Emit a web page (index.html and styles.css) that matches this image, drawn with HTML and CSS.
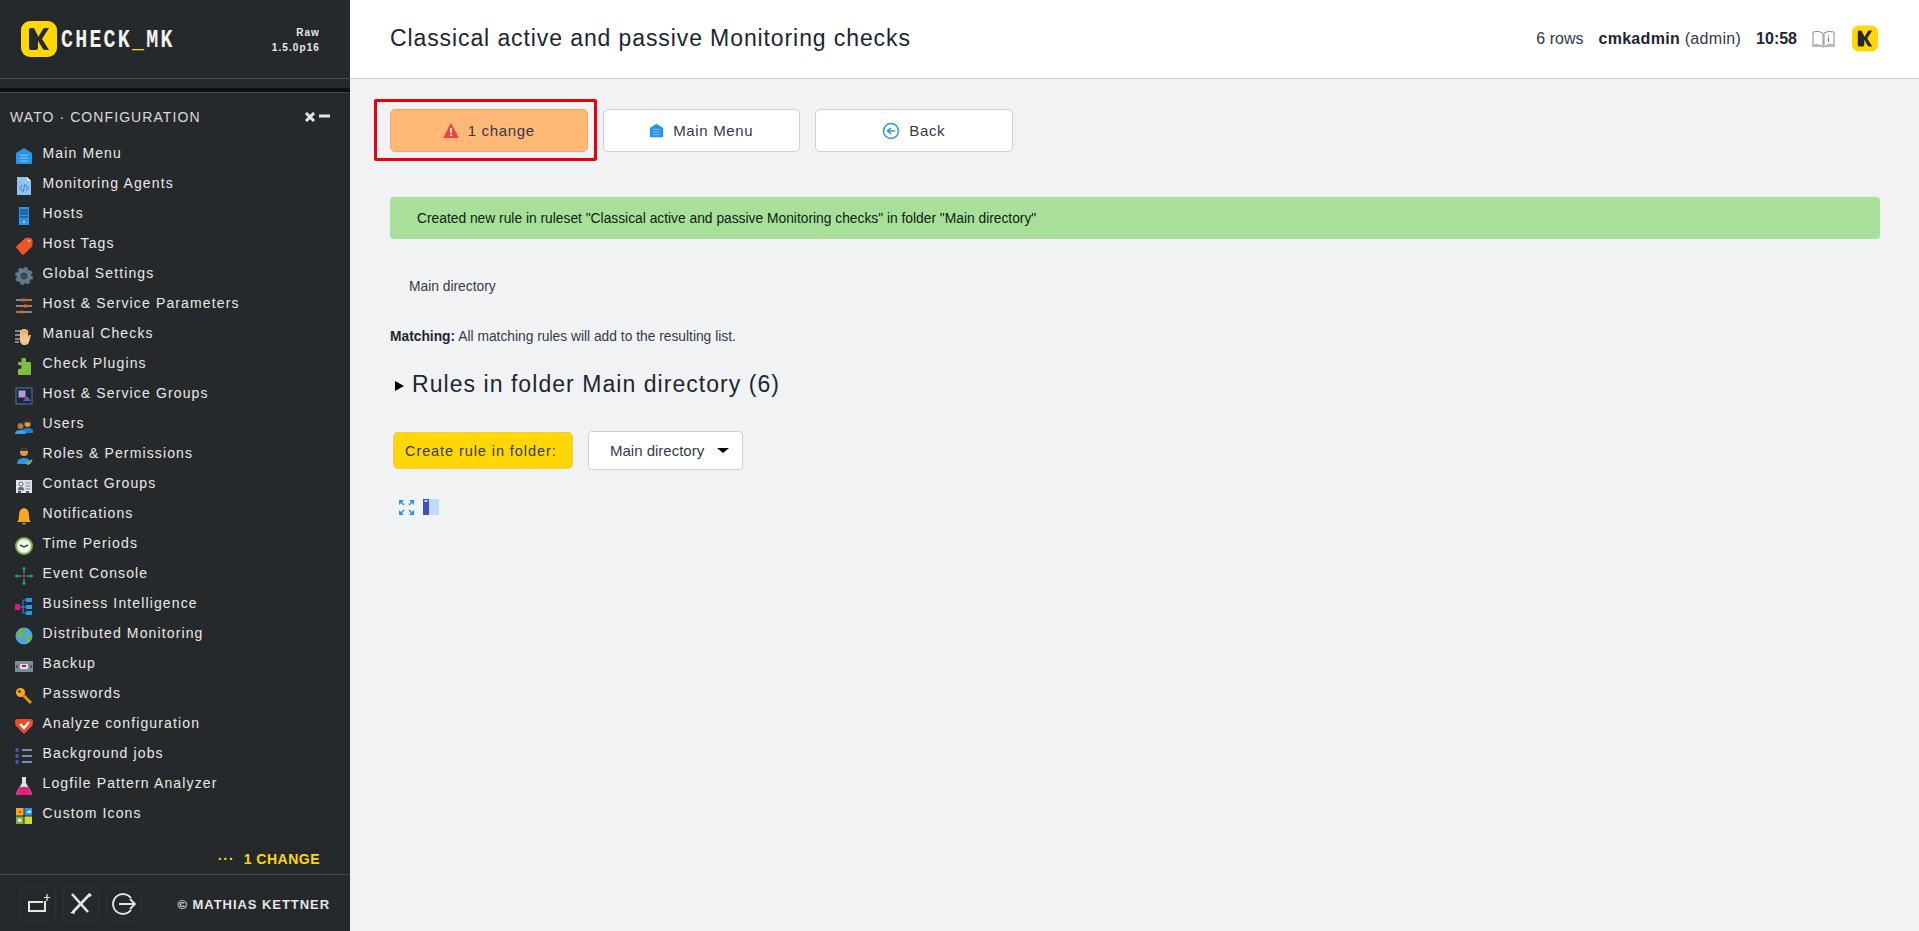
FILE: index.html
```html
<!DOCTYPE html>
<html lang="en">
<head>
    <meta charset="UTF-8">
    <meta name="viewport" content="width=device-width, initial-scale=1.0">
    <title>Classical active and passive Monitoring checks</title>
    <link rel="stylesheet" href="styles.css">
</head>
<body>

<aside class="sidebar">
    <div class="side-head">
        <div class="logo">
            <svg class="logo-mark" width="36" height="36" viewBox="0 0 36 36"><rect width="36" height="36" rx="9" fill="#ffd703"/><path d="M8 9q0-2 2-2h2q1 0 2 2l3 6v12q0 2-2 2h-5q-2 0-2-2zM28 7l-7 11 7 11h-4q-1 0-2-1l-6-10 6-10q1-1 2-1z" fill="#26292b"/></svg>
            <span class="logo-text">CHECK<span class="logo-us">_</span>MK</span>
        </div>
        <div class="version">Raw<br>1.5.0p16</div>
    </div>
    <div class="side-band"></div>

    <div class="snapin-title">
        <span>WATO · CONFIGURATION</span>
        <span class="snapin-ctrl">
            <svg width="12" height="10" viewBox="0 0 12 10"><path d="M2 1l8 8M10 1L2 9" stroke="#e4e6e6" stroke-width="3"/></svg>
            <svg width="11" height="10" viewBox="0 0 11 10"><path d="M0 4h11" stroke="#e4e6e6" stroke-width="3"/></svg>
        </span>
    </div>

    <ul class="menu">
        <li><svg viewBox="0 0 18 18"><path d="M1 6l8-5 8 5v10q0 1-1 1H2q-1 0-1-1z" fill="#2a93ea"/><path d="M5 8h8M5 11h8M5 14h8" stroke="#8cc6f5" stroke-width="1"/></svg>Main Menu</li>
        <li><svg viewBox="0 0 18 18"><path d="M2 0h10l4 4v14H2z" fill="#8fc4f1"/><path d="M12 0v4h4z" fill="#d6eafb"/><path d="M7 8l-2 3 2 3M11 8l2 3-2 3M10 7l-2 8" stroke="#2a7fd0" fill="none"/></svg>Monitoring Agents</li>
        <li><svg viewBox="0 0 18 18"><rect x="4" y="0" width="10" height="18" fill="#2a93ea"/><path d="M5 3h8M5 5h8M5 7h8M5 10h8" stroke="#123f63"/><circle cx="9" cy="15" r="1" fill="#cde6fb"/></svg>Hosts</li>
        <li><svg viewBox="0 0 18 18"><path d="M10 1.500q1-1 2-1l4.500 1q1 .5 1 1.500v5q0 1-1 2L9 17.500q-1 .5-2 0L1.500 11q-1-1 0-2z" fill="#ee5428"/><circle cx="14" cy="4" r="1.200" fill="#f9b39c"/></svg>Host Tags</li>
        <li><svg viewBox="0 0 18 18"><circle cx="9" cy="9" r="5.500" fill="#37474f" stroke="#5e7c8d" stroke-width="4"/><circle cx="9" cy="9" r="7.800" fill="none" stroke="#5e7c8d" stroke-width="2.400" stroke-dasharray="3.500 2.630"/></svg>Global Settings</li>
        <li><svg viewBox="0 0 18 18"><path d="M1 3h16M1 9h16M1 15h16" stroke="#e8e8e8" stroke-width="1"/><path d="M9 3h8M1 9h3M12 9h5M1 15h5" stroke="#ee5a24" stroke-width="1"/><rect x="7" y="1.500" width="3" height="3" fill="#ee5a24"/><rect x="9" y="7.500" width="3" height="3" fill="#ee5a24"/><rect x="5" y="13.500" width="3" height="3" fill="#ee5a24"/></svg>Host &amp; Service Parameters</li>
        <li><svg viewBox="0 0 18 18"><path d="M5 9V3h2v4-5h2v5-5h2v5-4h2v7l1-2h2l-2 7q-1 3-4 3H9q-3 0-4-4z" fill="#f5c48a"/><path d="M7 3v5M9 2v5M11 2v5M13 3v5" stroke="#c98a4a" stroke-width=".600"/><path d="M0 4h5M0 8h5M0 12h5M0 15h4" stroke="#e8e8e8" stroke-width="1.200"/><path d="M3 4h2M3 12h2" stroke="#ee5a24" stroke-width="1.200"/></svg>Manual Checks</li>
        <li><svg viewBox="0 0 18 18"><path d="M7 1h3q1 0 1 1v3h4q1 0 1 1v11q0 1-1 1H4q-1 0-1-1v-5h1.500a2 2 0 0 0 0-4H3V6q0-1 1-1h2.500V2q0-1 .5-1z" fill="#7fbf3f"/></svg>Check Plugins</li>
        <li><svg viewBox="0 0 18 18"><rect x="1" y="1" width="16" height="16" fill="#1d2733" stroke="#3a7fc1"/><rect x="3.500" y="3.500" width="7" height="7" fill="#b69ad8"/><path d="M8 14l4-5 4 5z" fill="#7f4fb0"/></svg>Host &amp; Service Groups</li>
        <li><svg viewBox="0 0 18 18"><circle cx="5.500" cy="9" r="3" fill="#b8794a"/><circle cx="12.500" cy="7" r="3" fill="#e09a50"/><path d="M8.500 4.500q4-3 7 0v1h-7z" fill="#4a3020"/><path d="M2.500 8q3-3 6 0v-1h-6z" fill="#4a3020"/><path d="M7 16V13q2-2 5.500-2t5.500 2v3z" fill="#1e80d0"/><path d="M0 17q0-4 5.500-4t5.500 4z" fill="#3aa0ef"/></svg>Users</li>
        <li><svg viewBox="0 0 18 18"><circle cx="9" cy="5" r="4" fill="#e09a50"/><path d="M5 4q0-4 4-4t4 4z" fill="#3a3a3a"/><path d="M2 17q0-6 7-6t7 6z" fill="#2a93ea"/><path d="M11 15l2 2 4-4" stroke="#6fbf3f" stroke-width="2" fill="none"/></svg>Roles &amp; Permissions</li>
        <li><svg viewBox="0 0 18 18"><rect x="1" y="3" width="16" height="13" fill="#dfe4e8"/><circle cx="6" cy="7" r="2" fill="#fff" stroke="#55606a"/><path d="M3 13q0-3 3-3t3 3zM10.500 6h5M10.500 9h5M10.500 12h5" fill="#55606a" stroke="#7a858e"/><path d="M3 16h3v-2H3zM11 16h3v-2h-3z" fill="#55606a"/></svg>Contact Groups</li>
        <li><svg viewBox="0 0 18 18"><path d="M9 1q5 1 5 7t2 7H2q2-1 2-7t5-7z" fill="#f9a825"/><path d="M7 16h4l-2 2z" fill="#f9a825"/></svg>Notifications</li>
        <li><svg viewBox="0 0 18 18"><circle cx="9" cy="9" r="8" fill="#f4f7ee" stroke="#7cb342" stroke-width="2"/><path d="M5 8l4 2 4-2" stroke="#37474f" stroke-width="1.500" fill="none"/></svg>Time Periods</li>
        <li><svg viewBox="0 0 18 18"><path d="M9 0v6M9 12v6M0 9h6M12 9h6" stroke="#26a69a" stroke-width="1.500"/><path d="M7 2l2-2 2 2zM7 16l2 2 2-2zM2 7L0 9l2 2zM16 7l2 2-2 2z" fill="#26a69a"/><circle cx="9" cy="9" r="1.500" fill="#ec407a"/></svg>Event Console</li>
        <li><svg viewBox="0 0 18 18"><rect x="0" y="7" width="5" height="6" fill="#d81b78"/><path d="M5 10h6M8 3v13M8 3h4M8 16h4" stroke="#2a93ea"/><rect x="11" y="1" width="6" height="4" fill="#2a93ea"/><rect x="11" y="8" width="6" height="4" fill="#2a93ea"/><rect x="11" y="14" width="6" height="4" fill="#2a93ea"/></svg>Business Intelligence</li>
        <li><svg viewBox="0 0 18 18"><circle cx="9" cy="9" r="8.500" fill="#4aa6e0"/><path d="M4 3l5-1 1 3-3 3 1 3-3-1-3-3zM11 8l5 1-1 5-3 2-1-4z" fill="#7cb342"/></svg>Distributed Monitoring</li>
        <li><svg viewBox="0 0 18 18"><rect x="0" y="4" width="18" height="11" fill="#78909c"/><rect x="5" y="7" width="8" height="5" fill="#f3d9e4"/><path d="M2 8v3M16 8v3" stroke="#26292b"/><rect x="7" y="8" width="4" height="2" fill="#c2185b"/></svg>Backup</li>
        <li><svg viewBox="0 0 18 18"><circle cx="5.500" cy="5.500" r="4.500" fill="#f9a825"/><circle cx="4.500" cy="4.500" r="1.300" fill="#26292b"/><path d="M8 8l8 8" stroke="#ef8c1a" stroke-width="3"/></svg>Passwords</li>
        <li><svg viewBox="0 0 18 18"><path d="M9 17L1 9Q0 7 0 5q0-3 3-3h12q3 0 3 3 0 2-1 4z" fill="#ee4b26"/><path d="M5 7l4 4 5-6" stroke="#fff" stroke-width="2.400" fill="none"/></svg>Analyze configuration</li>
        <li><svg viewBox="0 0 18 18"><path d="M2 1v4M2 7v4M2 13v4" stroke="#3f51b5" stroke-width="3"/><path d="M2 2v1M2 8v1M2 14v1" stroke="#5a7fd6" stroke-width="1"/><path d="M7 3h10M7 9h10M7 15h10" stroke="#8fb4d8" stroke-width="1.500"/></svg>Background jobs</li>
        <li><svg viewBox="0 0 18 18"><path d="M7 0h4v6l6 10q0 2-2 2H3q-2 0-2-2l6-10z" fill="#d8e2e8"/><path d="M5 10h8l4 6q0 2-2 2H3q-2 0-2-2z" fill="#e91e80"/></svg>Logfile Pattern Analyzer</li>
        <li><svg viewBox="0 0 18 18"><rect x="1" y="1" width="7.500" height="7.500" fill="#f9a825"/><rect x="9.500" y="1" width="7.500" height="7.500" fill="#2a93ea"/><rect x="1" y="9.500" width="7.500" height="7.500" fill="#7cb342"/><rect x="9.500" y="9.500" width="7.500" height="7.500" fill="#cddc39"/><circle cx="4.700" cy="13.200" r="1.800" fill="#f4f7ee"/><path d="M3 6l2-3 2 3z" fill="#e65100"/><path d="M11 6q3-4 5-2v2z" fill="#cde6fb"/></svg>Custom Icons</li>
    </ul>

    <div class="side-change"><span class="dots">···</span>1 CHANGE</div>

    <div class="side-foot">
        <span class="foot-btn"><svg width="24" height="24" viewBox="0 0 24 24"><path d="M19 9v10H3v-9h14" stroke="#e4e6e6" stroke-width="2" fill="none"/><path d="M21 2v7M18 5.500h6" stroke="#e4e6e6" stroke-width="1.200"/></svg></span>
        <span class="foot-btn"><svg width="24" height="24" viewBox="0 0 24 24"><path d="M3 2l16 18M21 2L4 20" stroke="#e4e6e6" stroke-width="2.600"/><path d="M21 1l2 3-3 1zM1 21l4-3 1 4z" fill="#e4e6e6"/></svg></span>
        <span class="foot-btn"><svg width="24" height="24" viewBox="0 0 24 24"><path d="M19 6A10 10 0 1 0 19 18" stroke="#e4e6e6" stroke-width="1.800" fill="none"/><path d="M7 12h16M18 7l5 5-5 5" stroke="#e4e6e6" stroke-width="1.800" fill="none"/></svg></span>
        <span class="copyright">© MATHIAS KETTNER</span>
    </div>
</aside>

<div class="page">
    <header class="top">
        <h1>Classical active and passive Monitoring checks</h1>
        <div class="top-info">
            <span class="rows">6 rows</span>
            <span class="user"><b>cmkadmin</b> (admin)</span>
            <b class="clock">10:58</b>
            <svg class="book" width="23" height="18" viewBox="0 0 23 18"><path d="M1 2q5-2 10 1v13q-5-2-10-1zM22 2q-5-2-10 1v13q5-2 10-1z" fill="#fff" stroke="#8b9094"/><path d="M0 15v2h10l1.500 1 1.500-1h10v-2" fill="#b9bcbf"/><path d="M16.500 5v1M16.500 7.500V12" stroke="#777"/></svg>
            <svg class="top-logo" width="26" height="27" viewBox="0 0 36 36"><rect width="36" height="36" rx="9" fill="#ffd703"/><path d="M8 9q0-2 2-2h2q1 0 2 2l3 6v12q0 2-2 2h-5q-2 0-2-2zM28 7l-7 11 7 11h-4q-1 0-2-1l-6-10 6-10q1-1 2-1z" fill="#26292b"/></svg>
        </div>
    </header>

    <main class="content">
        <div class="buttons">
            <a class="btn btn-change"><svg width="16" height="15" viewBox="0 0 16 15"><path d="M8 0l8 15H0z" fill="#e9483a"/><path d="M8 5v5M8 11v2" stroke="#fff" stroke-width="1.600"/></svg>1 change</a>
            <a class="btn"><svg width="15" height="17" viewBox="0 0 18 18"><path d="M1 6l8-5 8 5v10q0 1-1 1H2q-1 0-1-1z" fill="#2a93ea"/><path d="M5 8h8M5 11h8M5 14h8" stroke="#8cc6f5"/></svg>Main Menu</a>
            <a class="btn"><svg width="18" height="18" viewBox="0 0 18 18"><circle cx="9" cy="9" r="7.500" fill="none" stroke="#2a93ea" stroke-width="1.500"/><path d="M13 9H6M9 6L5.500 9 9 12" stroke="#2a93ea" stroke-width="1.600" fill="none"/></svg>Back</a>
        </div>

        <div class="success">Created new rule in ruleset "Classical active and passive Monitoring checks" in folder "Main directory"</div>

        <div class="breadcrumb">Main directory</div>

        <p class="matching"><b>Matching:</b> All matching rules will add to the resulting list.</p>

        <h2 class="rules-head"><span class="tri"></span>Rules in folder Main directory (6)</h2>

        <div class="create-row">
            <a class="create-btn">Create rule in folder:</a>
            <div class="select">Main directory<span class="caret"></span></div>
        </div>

        <div class="tools">
            <svg width="17" height="17" viewBox="0 0 17 17"><path d="M1 1h5L1 6zM16 1h-5l5 5zM1 16h5l-5-5zM16 16h-5l5-5z" fill="#2a93ea"/><path d="M3 3l3 3M14 3l-3 3M3 14l3-3M14 14l-3-3" stroke="#2a93ea" stroke-width="1.500"/></svg>
            <svg width="16" height="16" viewBox="0 0 16 16"><rect width="16" height="16" fill="#bcdcf8"/><rect width="6" height="16" fill="#3f51b5"/><rect x="1.500" y="1" width="3" height="2" fill="#bcdcf8"/></svg>
        </div>
    </main>
</div>

</body>
</html>
```

FILE: styles.css
```css
* { box-sizing: border-box; }
html, body { height: 100%; }
body { margin: 0; display: flex; height: 931px; overflow: hidden; font-family: "Liberation Sans", Arial, sans-serif; color: #1e2533; background: #f1f2f4; }

/* sidebar */
.sidebar { width: 350px; flex: none; background: #26292b; color: #e8e9e9; display: flex; flex-direction: column; }
.side-head { height: 79px; border-bottom: 1px solid #46494b; display: flex; justify-content: space-between; padding: 21px 30px 0 21px; }
.logo { display: flex; align-items: flex-start; gap: 4px; }
.logo-text { font-family: "Liberation Mono", monospace; font-weight: bold; font-size: 20px; line-height: 36px; color: #f0f1f1; display: inline-block; transform: scaleY(1.250); letter-spacing: 2.200px; margin-top: 2px; }
.logo-us { color: #ffd703; }
.version { font-size: 10px; font-weight: bold; line-height: 15px; letter-spacing: 1.100px; text-align: right; padding-top: 4px; }
.side-band { height: 14px; border-bottom: 1px solid #46494b; background: linear-gradient(#26292b 0 9px, #0d0f10 9px); }
.snapin-title { display: flex; justify-content: space-between; align-items: center; padding: 0 20px 0 10px; height: 47px; font-size: 14px; letter-spacing: 1.080px; color: #d8dada; }
.snapin-ctrl { display: flex; gap: 3px; align-items: center; }
.menu { list-style: none; margin: -2px 0 0; padding: 0 0 0 15px; }
.menu li { height: 30px; display: flex; align-items: center; font-size: 14px; letter-spacing: 1.130px; white-space: nowrap; }
.menu svg { width: 18px; height: 18px; margin-right: 9.500px; flex: none; position: relative; top: 3px; }
.side-change { margin-top: auto; text-align: right; padding: 0 30px 7px 0; font-size: 14px; font-weight: bold; letter-spacing: 0.500px; color: #ffd703; }
.dots { margin-right: 9px; letter-spacing: 1px; }
.side-foot { height: 57px; border-top: 1px solid #46494b; display: flex; align-items: center; padding: 2px 20px 0; gap: 7px; }
.foot-btn { width: 36px; height: 36px; border: 1px solid #303335; border-radius: 6px; display: flex; align-items: center; justify-content: center; }
.copyright { margin-left: auto; font-size: 13px; font-weight: bold; letter-spacing: 0.950px; color: #e4e6e6; }

/* header */
.page { flex: 1; display: flex; flex-direction: column; min-width: 0; }
.top { height: 79px; background: #fff; border-bottom: 1px solid #ccced3; display: flex; justify-content: space-between; align-items: center; padding: 0 41px 1px 40px; flex: none; }
h1 { margin: 0; font-size: 23px; font-weight: normal; letter-spacing: 0.900px; color: #1e2533; }
.top-info { display: flex; align-items: center; font-size: 16px; color: #333a47; }
.user { margin-left: 15px; letter-spacing: 0.300px; }
.user b, .clock { color: #1e2533; }
.clock { margin-left: 15px; }
.book { margin-left: 15px; }
.top-logo { margin-left: 17px; }

/* content */
.content { padding: 30px 40px 0; }
.buttons { display: flex; gap: 15px; }
.btn { position: relative; width: 197.500px; height: 43px; background: #fff; border: 1px solid #ccd0d8; border-radius: 5px; display: flex; align-items: center; justify-content: center; gap: 9px; font-size: 15px; letter-spacing: 0.650px; color: #333a47; }
.btn-change { background: #ffb878; border-color: #eda765; }
.btn-change::after { content: ""; position: absolute; left: -17px; top: -11px; right: -10px; bottom: -10px; border: 3px solid #e8000d; border-radius: 2px; }
.success { margin-top: 45px; width: 1490px; height: 42px; background: #a8e09a; border-radius: 4px; padding-left: 27px; display: flex; align-items: center; font-size: 13.800px; color: #0e1c12; }
.breadcrumb { margin: 39px 0 0 19px; font-size: 13.800px; line-height: 18px; color: #333a47; }
.matching { margin: 32px 0 0; font-size: 13.800px; line-height: 18px; color: #333a47; }
.matching b { color: #1e2533; }
.rules-head { margin: 23px 0 0; font-size: 23px; line-height: 30px; font-weight: normal; letter-spacing: 1.050px; display: flex; align-items: center; color: #1e2533; }
.tri { width: 0; height: 0; border-left: 9px solid #000; border-top: 5.500px solid transparent; border-bottom: 5.500px solid transparent; margin: 3px 8px 0 5px; }
.create-row { display: flex; align-items: center; margin: 32px 0 0 3px; }
.create-btn { width: 180px; height: 37px; background: #ffd703; border: 1px solid #e5cf55; border-radius: 5px; display: flex; align-items: center; padding-left: 11px; font-size: 14.500px; letter-spacing: 0.920px; color: #333a47; }
.select { width: 155px; height: 39px; margin-left: 15px; background: #fff; border: 1px solid #ccd0d8; border-radius: 4px; display: flex; align-items: center; padding-left: 21px; font-size: 15px; color: #333a47; }
.caret { width: 0; height: 0; margin-left: 13px; border-top: 5px solid #000; border-left: 6px solid transparent; border-right: 6px solid transparent; }
.tools { display: flex; gap: 8px; margin: 29px 0 0 8px; }
```
